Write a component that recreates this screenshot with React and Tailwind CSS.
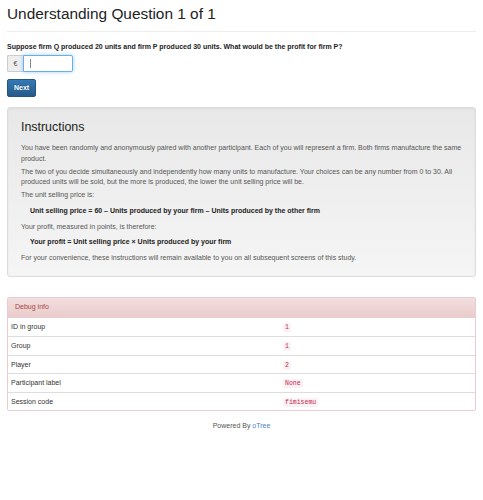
export default function App() {
  const rows = [
    ["ID in group", "1"],
    ["Group", "1"],
    ["Player", "2"],
    ["Participant label", "None"],
    ["Session code", "fimisemu"],
  ];
  return (
    <div className="min-h-[500px] w-[483px] bg-white text-[#333] font-['Liberation_Sans',Arial,sans-serif] text-[7px] leading-[10.3px]">
      <div className="px-[7px]">
        <div className="pt-[5px] pb-[9px] border-b border-[#eee]">
          <h2 className="text-[15.4px] leading-[17px] text-[#222] font-normal">Understanding Question 1 of 1</h2>
        </div>
        <div className="mt-[10px] font-bold text-[#222]">Suppose firm Q produced 20 units and firm P produced 30 units. What would be the profit for firm P?</div>
        <div className="mt-[3px] flex h-[17px]">
          <div className="w-[16px] flex items-center justify-center bg-[#eee] border border-[#ccc] border-r-0 rounded-l-[2px] text-[#555]">€</div>
          <div className="w-[50px] flex items-center pl-[6px] bg-white border border-[#66afe9] rounded-r-[2px] shadow-[0_0_4px_rgba(102,175,233,0.6)]">
            <span className="block w-px h-[9px] bg-[#888]"></span>
          </div>
        </div>
        <div className="mt-[7px]">
          <button className="h-[18px] px-[6px] rounded-[2px] border border-[#245580] bg-[linear-gradient(#337ab7,#265a88)] text-white font-bold text-[7px] [text-shadow:0_-1px_0_rgba(0,0,0,0.2)]">Next</button>
        </div>
        <div className="mt-[10px] rounded-[3px] border border-[#dcdcdc] bg-[linear-gradient(#e8e8e8,#f5f5f5)] shadow-[inset_0_1px_3px_rgba(0,0,0,0.05)] pt-[12px] pb-[8px] px-[13px] text-[#555]">
          <h3 className="text-[12.4px] leading-[14px] text-[#222] font-normal mb-[9px]">Instructions</h3>
          <p className="mb-[3px]">You have been randomly and anonymously paired with another participant. Each of you will represent a firm. Both firms manufacture the same product.</p>
          <p className="mb-[3px]">The two of you decide simultaneously and independently how many units to manufacture. Your choices can be any number from 0 to 30. All produced units will be sold, but the more is produced, the lower the unit selling price will be.</p>
          <p className="mb-[5px]">The unit selling price is:</p>
          <p className="mb-[6px] pl-[9px] font-bold text-[#222]">Unit selling price = 60 – Units produced by your firm – Units produced by the other firm</p>
          <p className="mb-[5px]">Your profit, measured in points, is therefore:</p>
          <p className="mb-[5px] pl-[9px] font-bold text-[#222]">Your profit = Unit selling price × Units produced by your firm</p>
          <p className="mb-[5px]">For your convenience, these instructions will remain available to you on all subsequent screens of this study.</p>
        </div>
        <div className="mt-[20px] rounded-[2px] border border-[#ebccd1] overflow-hidden">
          <div className="h-[20px] flex items-center px-[7px] bg-[linear-gradient(#f2dede,#ebcccc)] border-b border-[#ebccd1] text-[#a94442]">Debug info</div>
          {rows.map(([k, v], i) => (
            <div key={k} className={`grid grid-cols-[272px_1fr] h-[18.5px] items-center ${i > 0 ? "border-t border-[#ddd]" : ""}`}>
              <div className="pl-[3px]">{k}</div>
              <div className="pl-[3px]">
                <code className="font-['Liberation_Mono',monospace] text-[6.5px] leading-[9px] px-[2px] py-[1px] rounded-[2px] bg-[#f9f2f4] text-[#c7254e]">{v}</code>
              </div>
            </div>
          ))}
        </div>
        <div className="mt-[10px] text-center text-[#555]">
          Powered By <span className="text-[#4a84c4]">oTree</span>
        </div>
      </div>
    </div>
  );
}
